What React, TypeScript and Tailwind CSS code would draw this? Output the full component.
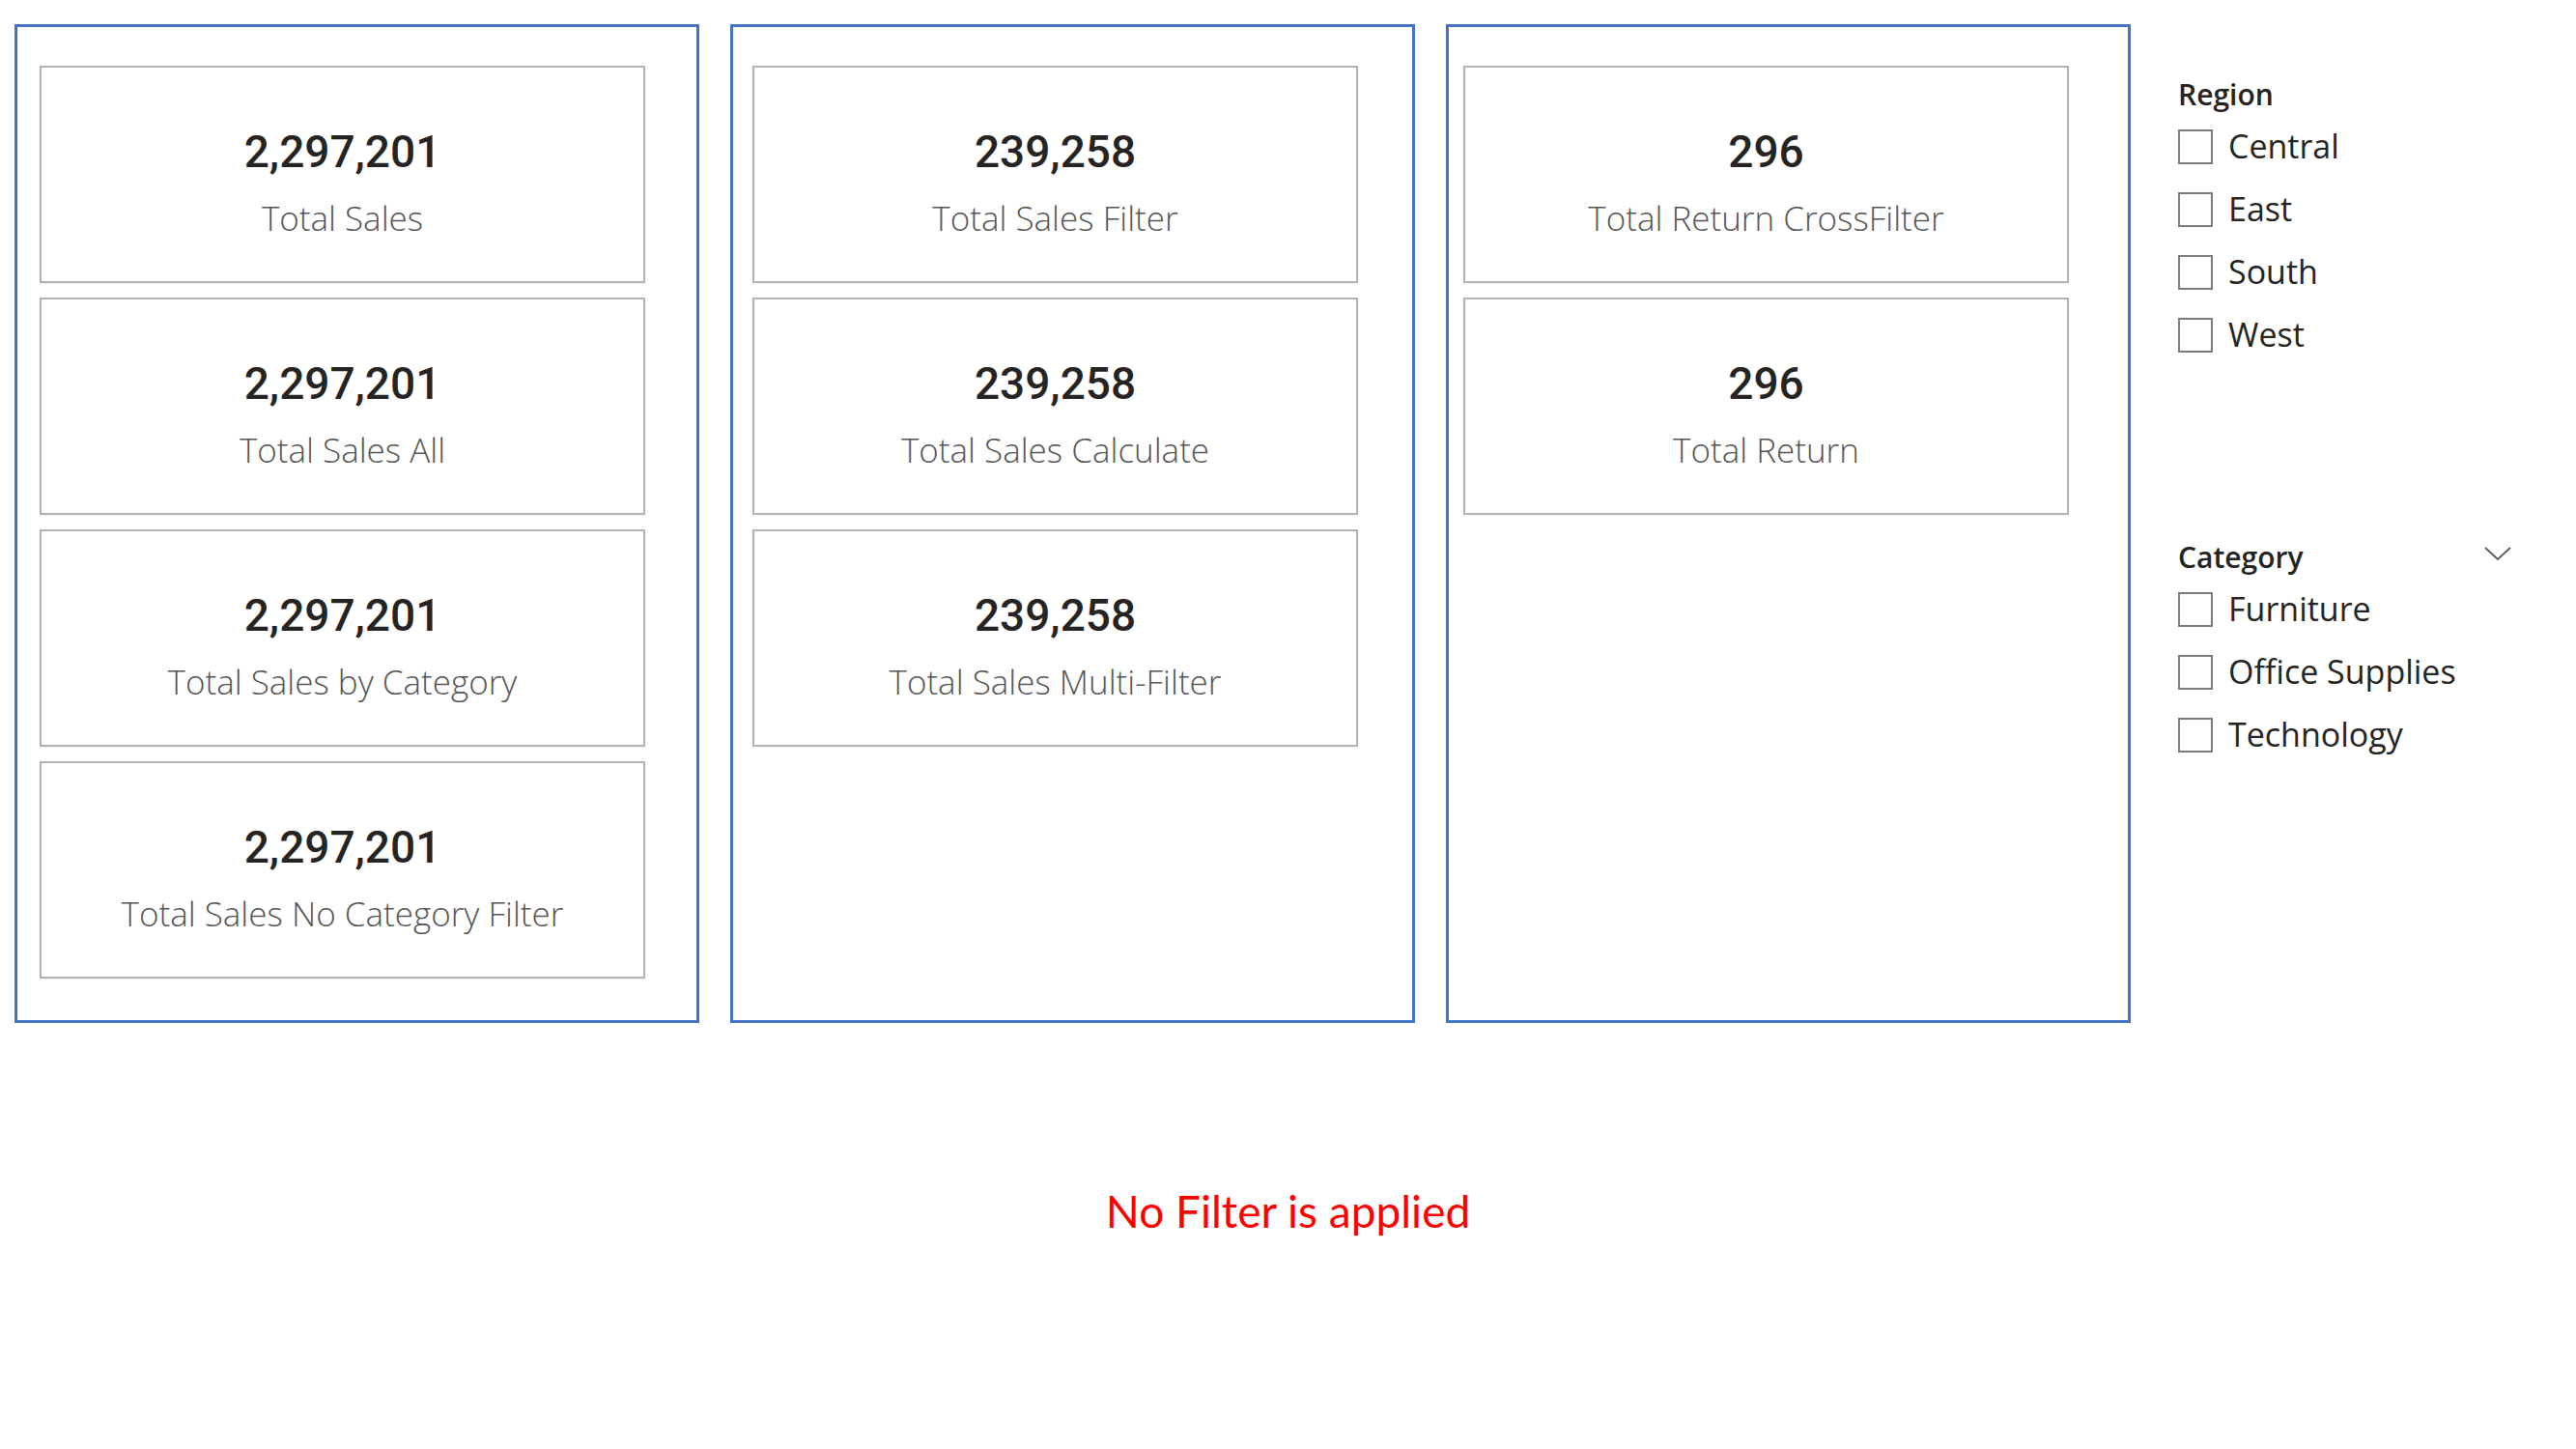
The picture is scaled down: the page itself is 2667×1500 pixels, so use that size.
import React from "react";

type CardData = { value: string; label: string };

const panels: { pl: string; cards: CardData[] }[] = [
  {
    pl: "pl-[23px]",
    cards: [
      { value: "2,297,201", label: "Total Sales" },
      { value: "2,297,201", label: "Total Sales All" },
      { value: "2,297,201", label: "Total Sales by Category" },
      { value: "2,297,201", label: "Total Sales No Category Filter" },
    ],
  },
  {
    pl: "pl-[20px]",
    cards: [
      { value: "239,258", label: "Total Sales Filter" },
      { value: "239,258", label: "Total Sales Calculate" },
      { value: "239,258", label: "Total Sales Multi-Filter" },
    ],
  },
  {
    pl: "pl-[15px]",
    cards: [
      { value: "296", label: "Total Return CrossFilter" },
      { value: "296", label: "Total Return" },
    ],
  },
];

function Card({ value, label }: CardData) {
  return (
    <div className="w-[627px] h-[225px] border-2 border-[#b3b3b3] bg-white shadow-[0_1px_2px_rgba(0,0,0,0.08)] flex flex-col items-center pt-[59px]">
      <div
        className="h-[56px] leading-[56px] text-[46px] font-medium text-[#252423]"
        style={{ fontFamily: "Roboto, 'Liberation Sans', sans-serif" }}
      >
        {value}
      </div>
      <div
        className="mt-[20px] h-[42px] leading-[42px] text-[35px] font-light text-[#555555]"
        style={{ fontFamily: "'Open Sans', sans-serif" }}
      >
        {label}
      </div>
    </div>
  );
}

function Panel({ pl, cards }: { pl: string; cards: CardData[] }) {
  return (
    <div className={`w-[709px] h-[1034px] border-[3px] border-[#4472c4] pt-[40px] ${pl} flex flex-col gap-[15px]`}>
      {cards.map((c, i) => (
        <Card key={i} {...c} />
      ))}
    </div>
  );
}

function Checkbox() {
  return <div className="w-[36px] h-[36px] border-2 border-[#7a7a7a] bg-white shrink-0" />;
}

function Slicer({ title, items, chevron }: { title: string; items: string[]; chevron?: boolean }) {
  return (
    <div className="w-[345px] flex flex-col">
      <div className="h-[44px] flex items-center justify-between">
        <span className="text-[30px] font-semibold text-[#252423]">{title}</span>
        {chevron && (
          <svg width="28" height="16" viewBox="0 0 28 16" className="mb-[6px]">
            <polyline points="1,2 14,14 27,2" fill="none" stroke="#605e5c" strokeWidth="2" />
          </svg>
        )}
      </div>
      {items.map((it) => (
        <div key={it} className="h-[65px] flex items-center">
          <Checkbox />
          <span className="ml-[16px] text-[34px] text-[#252423]">{it}</span>
        </div>
      ))}
    </div>
  );
}

export default function App() {
  return (
    <div className="w-[2667px] h-[1500px] bg-white overflow-hidden" style={{ fontFamily: "'Open Sans', sans-serif" }}>
      <div className="flex pl-[15px] pt-[25px]">
        <div className="flex gap-[32px]">
          {panels.map((p, i) => (
            <Panel key={i} {...p} />
          ))}
        </div>
        <div className="ml-[49px] pt-[50px] flex flex-col gap-[175px]">
          <Slicer title="Region" items={["Central", "East", "South", "West"]} />
          <Slicer title="Category" items={["Furniture", "Office Supplies", "Technology"]} chevron />
        </div>
      </div>
      <div
        className="mt-[165px] text-center h-[60px] leading-[60px] text-[46px] text-[#ff0000]"
        style={{ fontFamily: "Lato, 'Open Sans', sans-serif" }}
      >
        No Filter is applied
      </div>
    </div>
  );
}
